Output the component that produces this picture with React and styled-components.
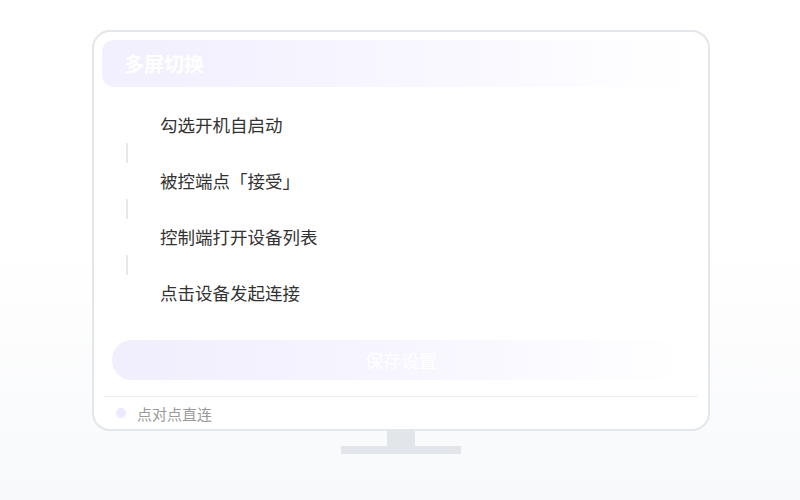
import React from "react";
import styled, { createGlobalStyle } from "styled-components";

const GlobalStyle = createGlobalStyle`
  html, body {
    margin: 0;
    padding: 0;
  }
  body {
    font-family: "Noto Sans CJK SC", "Noto Sans", sans-serif;
    background: linear-gradient(180deg, #ffffff 0%, #ffffff 48%, #f8f9fb 100%);
    min-height: 500px;
  }
`;

const Scene = styled.div`
  width: 800px;
  height: 500px;
  box-sizing: border-box;
  padding: 30px 0 0 2px;
  display: flex;
  flex-direction: column;
  align-items: center;
`;

const Screen = styled.div`
  width: 618px;
  height: 401px;
  box-sizing: border-box;
  border: 2px solid #e3e6ea;
  border-radius: 18px;
  background: #ffffff;
  padding: 8px 8px 0;
  display: flex;
  flex-direction: column;
`;

const Header = styled.div`
  height: 47px;
  border-radius: 12px;
  background: linear-gradient(90deg, #f2effe 0%, #f8f6ff 50%, #ffffff 100%);
  display: flex;
  align-items: center;
  padding-left: 22px;
  color: #ffffff;
  font-size: 20px;
  font-weight: 700;
`;

const StepList = styled.div`
  margin-top: 25px;
  padding-left: 24px;
  display: flex;
  flex-direction: column;
`;

const Step = styled.div`
  height: 26px;
  line-height: 26px;
  padding-left: 34px;
  font-size: 17.5px;
  color: #333333;
`;

const Connector = styled.div`
  width: 2px;
  height: 20px;
  margin: 5px 0;
  background: #e5e7eb;
  border-radius: 1px;
`;

const SaveButton = styled.button`
  margin: 34px 10px 0;
  height: 40px;
  border: none;
  border-radius: 20px;
  background: linear-gradient(90deg, #f1eefd 0%, #f7f5ff 50%, #ffffff 100%);
  color: #ffffff;
  font-family: inherit;
  font-size: 18px;
  cursor: pointer;
`;

const Divider = styled.div`
  margin: 16px 2px 0;
  height: 1px;
  background: #eceef1;
`;

const Footer = styled.div`
  height: 32px;
  display: flex;
  align-items: center;
  padding-left: 14px;
  gap: 11px;
  font-size: 15px;
  color: #9a9a9a;
`;

const Dot = styled.span`
  width: 10px;
  height: 10px;
  border-radius: 50%;
  background: #ede9fe;
`;

const Neck = styled.div`
  width: 28px;
  height: 15px;
  background: #e2e5e9;
`;

const Base = styled.div`
  width: 120px;
  height: 8px;
  background: #e2e5e9;
`;

const steps = ["勾选开机自启动", "被控端点「接受」", "控制端打开设备列表", "点击设备发起连接"];

export default function App() {
  return (
    <>
      <GlobalStyle />
      <Scene>
        <Screen>
          <Header>多屏切换</Header>
          <StepList>
            {steps.map((s, i) => (
              <React.Fragment key={s}>
                {i > 0 && <Connector />}
                <Step>{s}</Step>
              </React.Fragment>
            ))}
          </StepList>
          <SaveButton>保存设置</SaveButton>
          <Divider />
          <Footer>
            <Dot />
            点对点直连
          </Footer>
        </Screen>
        <Neck />
        <Base />
      </Scene>
    </>
  );
}
